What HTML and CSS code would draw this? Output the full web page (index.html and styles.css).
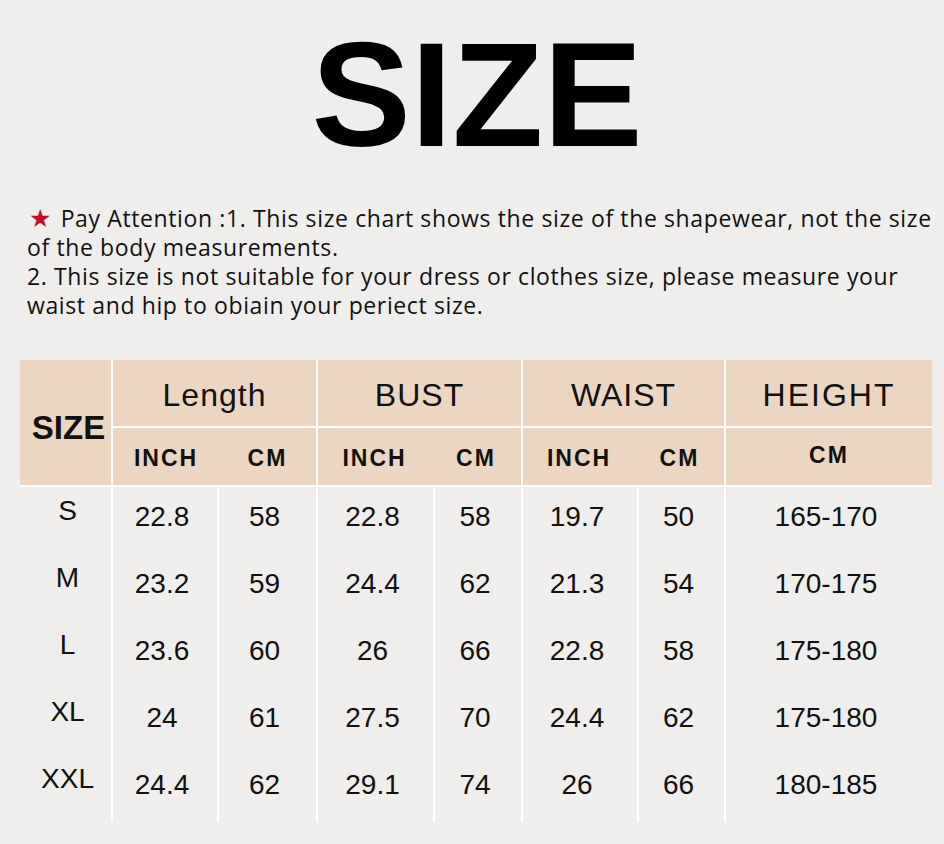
FILE: index.html
```html
<!DOCTYPE html>
<html>
<head>
<meta charset="utf-8">
<link rel="stylesheet" href="styles.css">
</head>
<body>
<div class="page">
  <h1 class="title">SIZE</h1>
  <p class="note"><span class="star">★</span> Pay Attention :1. This size chart shows the size of the shapewear, not the size<br>of the body measurements.<br>2. This size is not suitable for your dress or clothes size, please measure your<br>waist and hip to obiain your periect size.</p>
  <div class="chart">
    <div class="head">
      <div class="hcell size-head">SIZE</div>
      <div class="hcell group g-len">Length</div>
      <div class="hcell group g-bust">BUST</div>
      <div class="hcell group g-waist">WAIST</div>
      <div class="hcell group g-height">HEIGHT</div>
      <div class="hcell sub sub-len"><span>INCH</span><span>CM</span></div>
      <div class="hcell sub sub-bust"><span>INCH</span><span>CM</span></div>
      <div class="hcell sub sub-waist"><span>INCH</span><span>CM</span></div>
      <div class="hcell sub sub-height"><span>CM</span></div>
    </div>
    <div class="body">
      <div class="c sz">S</div><div class="c">22.8</div><div class="c">58</div><div class="c">22.8</div><div class="c">58</div><div class="c">19.7</div><div class="c">50</div><div class="c">165-170</div>
      <div class="c sz">M</div><div class="c">23.2</div><div class="c">59</div><div class="c">24.4</div><div class="c">62</div><div class="c">21.3</div><div class="c">54</div><div class="c">170-175</div>
      <div class="c sz">L</div><div class="c">23.6</div><div class="c">60</div><div class="c">26</div><div class="c">66</div><div class="c">22.8</div><div class="c">58</div><div class="c">175-180</div>
      <div class="c sz">XL</div><div class="c">24</div><div class="c">61</div><div class="c">27.5</div><div class="c">70</div><div class="c">24.4</div><div class="c">62</div><div class="c">175-180</div>
      <div class="c sz">XXL</div><div class="c">24.4</div><div class="c">62</div><div class="c">29.1</div><div class="c">74</div><div class="c">26</div><div class="c">66</div><div class="c">180-185</div>
    </div>
  </div>
</div>
</body>
</html>
```

FILE: styles.css
```css
html, body {
  margin: 0;
  padding: 0;
  background: #efeeec;
}
.page {
  width: 944px;
  height: 844px;
  overflow: hidden;
  background: #efeeec;
  color: #111;
  font-family: "Liberation Sans", Arial, sans-serif;
}
.title {
  margin: 0;
  padding-top: 21px;
  font-size: 149px;
  line-height: 147px;
  font-weight: bold;
  text-align: center;
  color: #000;
  padding-left: 10px;
}
.note {
  margin: 36px 0 0 0;
  padding-left: 27px;
  font-family: "Open Sans", sans-serif;
  font-size: 23px;
  letter-spacing: 0.62px;
  line-height: 29px;
  color: #111;
  white-space: nowrap;
}
.star {
  color: #c0102a;
  font-family: "DejaVu Sans", sans-serif;
  font-size: 25px;
  margin-left: 2px;
  margin-right: 2px;
}
.chart {
  margin: 40px 0 0 20px;
  width: 912px;
}
.head {
  display: grid;
  grid-template-columns: 91px 203px 203px 201px 206px;
  grid-template-rows: 66px 57px;
  gap: 2px;
  background: #fff;
  border-bottom: 2px solid #fff;
}
.hcell {
  background: #ecd5c1;
  display: flex;
  align-items: center;
  justify-content: center;
  color: #111;
}
.size-head {
  grid-row: 1 / span 2;
  font-weight: bold;
  font-size: 33px;
  padding-top: 10px;
  padding-left: 6px;
}
.group {
  font-size: 32px;
  letter-spacing: 1px;
  padding-top: 4px;
}
.g-height {
  letter-spacing: 2px;
}
.sub {
  font-weight: bold;
  font-size: 23px;
  letter-spacing: 2px;
  display: grid;
  padding-top: 4px;
}
.sub span {
  display: flex;
  justify-content: center;
}
.sub-len { grid-template-columns: 106px 97px; }
.sub-bust { grid-template-columns: 113px 90px; }
.sub-waist { grid-template-columns: 112px 89px; }
.sub-height { grid-template-columns: 1fr; padding-top: 0; padding-bottom: 2px; }
.body {
  display: grid;
  grid-template-columns: 91px 104px 97px 115px 86px 114px 85px 206px;
  grid-auto-rows: 67px;
  column-gap: 2px;
  background: #fff;
}
.c {
  background: #efeeec;
  display: flex;
  align-items: center;
  justify-content: center;
  font-size: 28px;
  color: #111;
  padding-bottom: 8px;
  padding-right: 6px;
}
.sz {
  padding-bottom: 20px;
  padding-right: 0;
  padding-left: 4px;
}
```
